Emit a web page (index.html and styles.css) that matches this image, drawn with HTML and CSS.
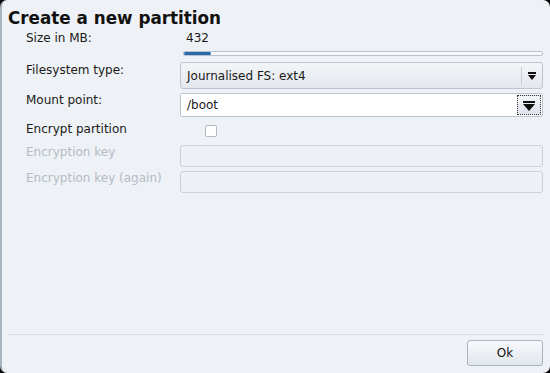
FILE: index.html
```html
<!DOCTYPE html>
<html lang="en">
<head>
    <meta charset="UTF-8">
    <title>Create a new partition</title>
    <link rel="stylesheet" href="styles.css">
</head>
<body>
    <div class="window">
        <h1>Create a new partition</h1>

        <!-- Partition form -->
        <div class="form">
            <div class="label label-top">Size in MB:</div>
            <div class="size">
                <div class="size-value">432</div>
                <div class="slider">
                    <div class="slider-fill"></div>
                </div>
            </div>

            <div class="label label-combo">Filesystem type:</div>
            <div class="combo">
                <span class="combo-text">Journalised FS: ext4</span>
                <span class="combo-arrow"><span class="arrow small"></span></span>
            </div>

            <div class="label">Mount point:</div>
            <div class="entry-combo">
                <div class="entry">/boot</div>
                <div class="entry-button"><span class="arrow"></span></div>
            </div>

            <div class="label label-check">Encrypt partition</div>
            <div class="check-cell"><span class="checkbox"></span></div>

            <div class="label disabled">Encryption key</div>
            <div class="entry disabled-entry"></div>

            <div class="label disabled">Encryption key (again)</div>
            <div class="entry disabled-entry"></div>
        </div>

        <div class="spacer"></div>

        <!-- Buttons -->
        <div class="footer">
            <button class="ok">Ok</button>
        </div>
    </div>
</body>
</html>
```

FILE: styles.css
```css
html, body {
    margin: 0;
    padding: 0;
    background-color: #000;
}
body {
    width: 550px;
    height: 373px;
    font-family: "DejaVu Sans", sans-serif;
    font-size: 12px;
    color: #1a1a1a;
}
.window {
    box-sizing: border-box;
    width: 550px;
    height: 373px;
    background-color: #eef1f5;
    border-left: 2px solid #a9b3bf;
    border-radius: 7px;
    display: flex;
    flex-direction: column;
    padding: 0 7px 7px 6px;
}
h1 {
    margin: 0;
    padding-top: 8px;
    font-size: 16.8px;
    font-weight: bold;
    color: #111;
    line-height: 20px;
}
.form {
    display: grid;
    grid-template-columns: 154px 363px;
    padding-left: 18px;
    row-gap: 4px;
    margin-top: 2px;
}
.label {
    line-height: 14px;
    color: #1a1a1a;
}
.label-top {
    line-height: 17px;
}
.label-combo {
    padding-top: 1px;
}
.label-check {
    padding-top: 1px;
}
.label.disabled {
    color: #b4bcc5;
}
.size {
    height: 28px;
}
.size-value {
    padding-left: 6px;
    line-height: 17px;
}
.slider {
    margin: 4px 0 0 3px;
    width: 358px;
    height: 3px;
    border: 1px solid #b8c3cf;
    border-radius: 2px;
    background-color: #f6f8fa;
}
.slider-fill {
    width: 27px;
    height: 3px;
    background-color: #2a6aa8;
    border-radius: 2px;
}
.combo {
    box-sizing: border-box;
    height: 27px;
    display: flex;
    align-items: center;
    border: 1px solid #bcc5cf;
    border-radius: 3px;
    background: linear-gradient(#f3f5f8, #e3e8ee);
}
.combo-text {
    flex: 1;
    padding-left: 6px;
}
.combo-arrow {
    width: 20px;
    height: 18px;
    border-left: 1px solid #c7ced6;
    display: flex;
    align-items: center;
    justify-content: center;
}
.arrow {
    width: 0;
    height: 0;
    border-left: 6px solid transparent;
    border-right: 6px solid transparent;
    border-top: 7px solid #111;
    position: relative;
    top: 2px;
}
.arrow::before {
    content: "";
    position: absolute;
    left: -6px;
    top: -10px;
    width: 12px;
    height: 2px;
    background-color: #111;
}
.arrow.small {
    border-left-width: 4px;
    border-right-width: 4px;
    border-top-width: 5px;
}
.arrow.small::before {
    left: -4px;
    top: -8px;
    width: 8px;
}
.entry-combo {
    display: flex;
    height: 24px;
    border: 1px solid #bcc5cf;
    border-radius: 2px;
    box-sizing: border-box;
    background-color: #fff;
}
.entry {
    box-sizing: border-box;
    flex: 1;
    height: 22px;
    line-height: 22px;
    padding-left: 6px;
    background-color: #fff;
}
.entry-button {
    box-sizing: border-box;
    width: 24px;
    margin: 1px;
    border: 1px dotted #333;
    background: linear-gradient(#f3f5f8, #dde3ea);
    display: flex;
    align-items: center;
    justify-content: center;
}
.check-cell {
    height: 20px;
    display: flex;
    align-items: center;
    padding-left: 25px;
}
.checkbox {
    width: 10px;
    height: 10px;
    border: 1px solid #b0bac5;
    border-radius: 2px;
    background-color: #fff;
}
.disabled-entry {
    height: 22px;
    border: 1px solid #c9d0d8;
    border-radius: 3px;
    background-color: #edf0f4;
}
.spacer {
    flex: 1;
}
.footer {
    border-top: 1px solid #d6dbe1;
    padding-top: 5px;
    display: flex;
    justify-content: flex-end;
}
.ok {
    width: 76px;
    height: 26px;
    font-family: "DejaVu Sans", sans-serif;
    font-size: 12px;
    color: #111;
    border: 1px solid #aab4bf;
    border-radius: 3px;
    background: linear-gradient(#f7f9fb, #e2e7ed);
}
```
